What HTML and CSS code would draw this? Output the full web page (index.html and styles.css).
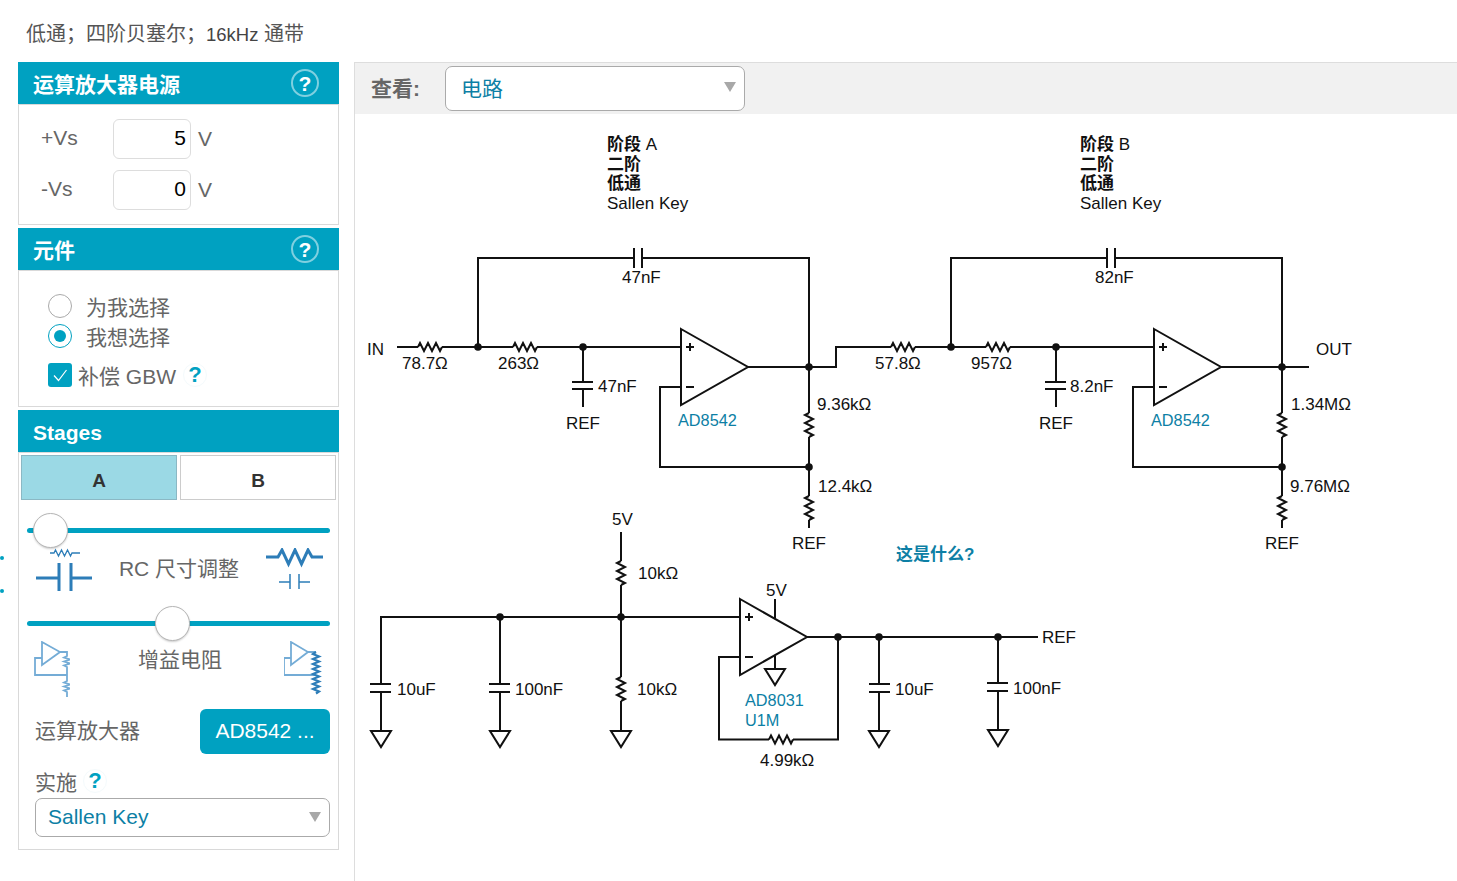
FILE: index.html
```html
<!DOCTYPE html>
<html lang="en">
<head>
	<meta charset="UTF-8">
	<title>低通滤波器</title>
	<link rel="stylesheet" href="styles.css">
</head>
<body>
	<span class="edge-dot dot-a"></span>
	<span class="edge-dot dot-b"></span>
	<div class="title">低通&#xFF1B;四阶贝塞尔&#xFF1B;<span class="title-num">16kHz</span> 通带</div>
	<div class="layout">
		<div class="sidebar">
			<div class="panel">
				<div class="panel-head">运算放大器电源<span class="help">?</span></div>
				<div class="panel-body supply">
					<div class="supply-row"><label>+Vs</label><input type="text" value="5" readonly><span class="unit">V</span></div>
					<div class="supply-row"><label>-Vs</label><input type="text" value="0" readonly><span class="unit">V</span></div>
				</div>
			</div>
			<div class="panel">
				<div class="panel-head">元件<span class="help">?</span></div>
				<div class="panel-body parts">
					<div class="radio-row"><span class="radio"></span>为我选择</div>
					<div class="radio-row"><span class="radio on"></span>我想选择</div>
					<div class="check-row">
						<span class="check"><svg width="24" height="24" viewBox="0 0 24 24"><path d="M6 12.5l4.5 5L18.5 7" fill="none" stroke="#fff" stroke-width="1.2"/></svg></span>
						<span class="check-text">补偿 GBW</span><span class="tip">?</span>
					</div>
				</div>
			</div>
			<div class="panel">
				<div class="panel-head head-latin">Stages</div>
				<div class="panel-body stages">
					<div class="tabs"><div class="tab active">A</div><div class="tab">B</div></div>
					<div class="slider slider-rc"><div class="track"></div><div class="thumb"></div></div>
					<div class="slider-row rc-row">
						<svg width="56" height="45" viewBox="36 547 56 45">
							<path class="ico" d="M50 552h4l1.500 -3 3 6 3 -6 3 6 3 -6 3 6 1.500 -3h8" stroke-width="1.300"/>
							<path class="ico" stroke-width="3" d="M36 577H59M59 562V590M71 562V590M71 577H92"/>
						</svg>
						<span>RC 尺寸调整</span>
						<svg width="57" height="45" viewBox="266 547 57 45">
							<path class="ico" stroke-width="3" d="M266 556h12l4 -7 6.500 14 6.500 -14 6.500 14 6.500 -14 4 7h11"/>
							<path class="ico" stroke-width="1.500" d="M279 581H290M290 573V588M299 573V588M299 581H310"/>
						</svg>
					</div>
					<div class="slider slider-gain"><div class="track"></div><div class="thumb"></div></div>
					<div class="slider-row gain-row">
						<svg width="36" height="57" viewBox="34 640 36 57">
							<path class="ico light" stroke-width="1.800" d="M42 641L60 651L42 664ZM42 657H35V674H67M60 651H67V655l-3 1.500 6 2 -6 2 6 2 -6 2 3 1.500V680l-3 1.500 6 2 -6 2 6 2 -6 2 3 1.500V696"/>
						</svg>
						<span>增益电阻</span>
						<svg width="38" height="57" viewBox="284 640 38 57">
							<path class="ico light" stroke-width="1.800" d="M291 641L308 651L291 664ZM291 657H284V674H316M308 651H316"/>
							<path class="ico" stroke-width="2.200" d="M316 651l-3 2 6 2.500 -6 2.500 6 2.500 -6 2.500 6 2.500 -6 2.500 6 2.500 -6 2.500 6 2.500 -6 2.500 6 2.500 -6 2.500 6 2.500 -6 2.500 6 2.500 -3 2"/>
						</svg>
					</div>
					<div class="amp-row"><span>运算放大器</span><div class="amp-btn">AD8542 ...</div></div>
					<div class="impl-row">实施<span class="tip">?</span></div>
					<div class="select impl-select">Sallen Key<span class="arrow"></span></div>
				</div>
			</div>
		</div>
		<div class="main">
			<div class="toolbar">
				<span class="toolbar-label">查看:</span>
				<div class="select view-select">电路<span class="arrow"></span></div>
			</div>
			<svg class="circuit" width="1102" height="767" viewBox="355 114 1102 767">
				<defs>
					<path id="rh" class="wire" d="M0 0l2 -4 4 8 4 -8 4 8 4 -8 4 8 2 -4"/>
					<path id="rv" class="wire" d="M0 0l-4 2 8 4 -8 4 8 4 -8 4 8 4 -4 2"/>
					<path id="gnd" class="wire" d="M-10 0H10L0 16Z"/>
					<g id="stage">
						<path class="wire" d="M478 347V258H634M642 258H809V413M809 437V496M809 520V528M634 248V268M642 248V268"/>
						<path class="wire" d="M478 347H513M537 347H681M583 347V382M572 382H593M572 389H593M583 389V407"/>
						<path class="wire" d="M681 329L748 367L681 405ZM686 347H694M690 343V351M686 387H694M681 387H660V467H809M748 367H809"/>
						<use href="#rh" x="513" y="347"/>
						<use href="#rv" x="809" y="413"/>
						<use href="#rv" x="809" y="496"/>
						<circle class="dot" cx="478" cy="347" r="3.800"/>
						<circle class="dot" cx="583" cy="347" r="3.800"/>
						<circle class="dot" cx="809" cy="367" r="3.800"/>
						<circle class="dot" cx="809" cy="467" r="3.800"/>
					</g>
				</defs>

				<use href="#stage"/>
				<use href="#stage" x="473"/>
				<path class="wire" d="M397 347H418M442 347H478M809 367H836V347H891M915 347H951M1282 367H1309"/>
				<use href="#rh" x="418" y="347"/>
				<use href="#rh" x="891" y="347"/>

				<!-- ref buffer -->
				<path class="wire" d="M621 532V561M621 585V677M621 701V731M381 684V617H740M500 617V684M370 684H391M370 692H391M381 692V731M489 684H510M489 692H510M500 692V731"/>
				<path class="wire" d="M740 599L807 637L740 675ZM745 617H753M749 613V621M745 657H753M775 599V618M775 656V669"/>
				<path class="wire" d="M807 637H1038M740 657H719V739.500H769M793 739.500H838V637M879 637V684M869 684H890M869 692H890M879 692V731M998 637V683M987 683H1008M987 691H1008M998 691V730"/>
				<use href="#rv" x="621" y="561"/>
				<use href="#rv" x="621" y="677"/>
				<use href="#rh" x="769" y="739.500"/>
				<use href="#gnd" x="381" y="731"/>
				<use href="#gnd" x="500" y="731"/>
				<use href="#gnd" x="621" y="731"/>
				<use href="#gnd" x="775" y="669"/>
				<use href="#gnd" x="879" y="731"/>
				<use href="#gnd" x="998" y="730"/>
				<circle class="dot" cx="500" cy="617" r="3.800"/>
				<circle class="dot" cx="621" cy="617" r="3.800"/>
				<circle class="dot" cx="838" cy="637" r="3.800"/>
				<circle class="dot" cx="879" cy="637" r="3.800"/>
				<circle class="dot" cx="998" cy="637" r="3.800"/>

				<text class="lbl"><tspan class="b" x="607" y="150">阶段</tspan> A<tspan class="b" x="607" y="170">二阶</tspan><tspan class="b" x="607" y="189">低通</tspan><tspan x="607" y="209">Sallen Key</tspan></text>
				<text class="lbl"><tspan class="b" x="1080" y="150">阶段</tspan> B<tspan class="b" x="1080" y="170">二阶</tspan><tspan class="b" x="1080" y="189">低通</tspan><tspan x="1080" y="209">Sallen Key</tspan></text>

				<text class="lbl" x="367" y="355">IN</text>
				<text class="lbl" x="402" y="369">78.7Ω</text>
				<text class="lbl" x="498" y="369">263Ω</text>
				<text class="lbl" x="622" y="283">47nF</text>
				<text class="lbl" x="598" y="392">47nF</text>
				<text class="lbl" x="566" y="429">REF</text>
				<text class="lbl part" x="678" y="426">AD8542</text>
				<text class="lbl" x="817" y="410">9.36kΩ</text>
				<text class="lbl" x="818" y="492">12.4kΩ</text>
				<text class="lbl" x="792" y="549">REF</text>

				<text class="lbl" x="875" y="369">57.8Ω</text>
				<text class="lbl" x="971" y="369">957Ω</text>
				<text class="lbl" x="1095" y="283">82nF</text>
				<text class="lbl" x="1070" y="392">8.2nF</text>
				<text class="lbl" x="1039" y="429">REF</text>
				<text class="lbl part" x="1151" y="426">AD8542</text>
				<text class="lbl" x="1316" y="355">OUT</text>
				<text class="lbl" x="1291" y="410">1.34MΩ</text>
				<text class="lbl" x="1290" y="492">9.76MΩ</text>
				<text class="lbl" x="1265" y="549">REF</text>
				<text class="lbl part link" x="896" y="560">这是什么?</text>

				<text class="lbl" x="612" y="525">5V</text>
				<text class="lbl" x="638" y="579">10kΩ</text>
				<text class="lbl" x="637" y="695">10kΩ</text>
				<text class="lbl" x="397" y="695">10uF</text>
				<text class="lbl" x="515" y="695">100nF</text>
				<text class="lbl" x="766" y="596">5V</text>
				<text class="lbl part" x="745" y="706">AD8031</text>
				<text class="lbl part" x="745" y="726">U1M</text>
				<text class="lbl" x="760" y="766">4.99kΩ</text>
				<text class="lbl" x="895" y="695">10uF</text>
				<text class="lbl" x="1013" y="694">100nF</text>
				<text class="lbl" x="1042" y="643">REF</text>
			</svg>
		</div>
	</div>
</body>
</html>
```

FILE: styles.css
```css
* { box-sizing: border-box; margin: 0; padding: 0; }
html, body { height: 100%; overflow: hidden; }
body { position: relative; background: #fff; color: #666; font-family: "Liberation Sans", "Noto Sans CJK SC", sans-serif; font-size: 21px; }

.edge-dot { position: absolute; left: 0; width: 4px; height: 4px; border-radius: 50%; background: #00a1c1; }
.dot-a { top: 556px; }
.dot-b { top: 589px; }

.title { height: 62px; padding: 20px 0 0 26px; font-size: 20px; line-height: 28px; color: #555; }
.title-num { font-size: 18.500px; color: #444; }

.layout { display: flex; height: 819px; }
.sidebar { width: 321px; margin-left: 18px; flex: none; }
.main { flex: 1; margin-left: 15px; border-left: 1px solid #ddd; border-top: 1px solid #ddd; }

.panel { margin-bottom: 3px; }
.panel-head { display: flex; justify-content: space-between; align-items: center; height: 42px; padding: 0 20px 1px 15px; background: #00a1c1; color: #fff; font-weight: bold; }
.head-latin { padding: 3px 20px 0 15px; }
.panel-body { border: 1px solid #d9d9d9; }
.help { display: flex; justify-content: center; align-items: center; width: 28px; height: 28px; margin-top: 1px; border: 2px solid #7fd0e0; border-radius: 50%; font-size: 21px; line-height: 1; }

.supply { display: flex; flex-direction: column; gap: 11px; padding: 14px 0 14px 22px; }
.supply-row { display: flex; align-items: center; height: 40px; }
.supply-row label { width: 72px; padding-bottom: 2px; }
.supply-row input { width: 78px; height: 40px; padding: 0 4px 2px 0; border: 1px solid #ddd; border-radius: 6px; font: inherit; color: #000; text-align: right; outline: none; }
.unit { margin-left: 7px; }

.parts { padding: 23px 0 19px 29px; }
.radio-row { display: flex; align-items: center; height: 24px; margin-bottom: 6px; }
.radio { display: flex; justify-content: center; align-items: center; width: 24px; height: 24px; margin-right: 14px; border: 1px solid #aaa; border-radius: 50%; }
.radio.on { border-color: #00a1c1; }
.radio.on::after { content: ""; width: 12px; height: 12px; border-radius: 50%; background: #00a1c1; }
.check-row { display: flex; align-items: center; height: 24px; margin-top: 15px; }
.check { width: 24px; height: 24px; border-radius: 3px; background: #00a1c1; }
.check-text { margin-left: 6px; }
.tip { display: inline-flex; justify-content: center; align-items: center; width: 24px; height: 24px; margin-left: 7px; border: 1px solid #f4fafc; border-radius: 50%; color: #00a1c1; font-size: 22px; font-weight: bold; }

.stages { height: 398px; padding: 2px 2px 0; }
.tabs { display: flex; gap: 3px; }
.tab { flex: 1; height: 45px; border: 1px solid #ccc; color: #333; font-size: 19px; font-weight: bold; line-height: 49px; text-align: center; }
.tab.active { background: #9bd9e5; border-color: #8bb8c4; }

.slider { position: relative; height: 35px; margin: 0 6px; }
.slider-rc { margin-top: 13px; }
.slider-gain { margin-top: 13px; }
.track { position: absolute; left: 0; right: 0; top: 15px; height: 5px; border-radius: 3px; background: #00a1c1; }
.thumb { position: absolute; top: 0; width: 35px; height: 35px; border: 1px solid #b5b5b5; border-radius: 50%; background: #fff; box-shadow: 0 1px 2px rgba(0,0,0,.2); }
.slider-rc .thumb { left: 6px; }
.slider-gain .thumb { left: 128px; }

.slider-row { display: flex; justify-content: space-between; }
.rc-row { height: 45px; margin: 0 13px 0 15px; align-items: center; }
.rc-row span { margin-bottom: 8px; }
.gain-row { height: 57px; margin: 0 14px 0 13px; }
.gain-row span { height: 28px; margin: 5px 0 0 6px; line-height: 28px; }
.ico { fill: none; stroke: #2d7db8; }
.ico.light { stroke: #74acd6; }

.amp-row { display: flex; justify-content: space-between; align-items: center; margin: 11px 6px 0 14px; }
.amp-row span { margin-bottom: 6px; }
.amp-btn { width: 130px; height: 45px; padding-bottom: 2px; border-radius: 6px; background: #00a1c1; color: #fff; line-height: 43px; text-align: center; }
.impl-row { display: flex; align-items: center; height: 26px; margin: 14px 0 0 14px; padding-bottom: 1px; }
.impl-row .tip { margin-left: 6px; }

.select { display: flex; justify-content: space-between; align-items: center; border: 1px solid #aaa; border-radius: 7px; background: #fff; color: #0d7fa5; }
.arrow { width: 0; height: 0; border-left: 6px solid transparent; border-right: 6px solid transparent; border-top: 10px solid #a8a8a8; }
.impl-select { width: 295px; height: 39px; margin: 4px 0 0 14px; padding: 0 8px 2px 12px; }
.view-select { width: 300px; height: 45px; padding: 0 8px 3px 15px; }

.toolbar { display: flex; align-items: center; height: 51px; padding-left: 16px; background: #f1f1f1; }
.toolbar-label { width: 74px; padding-bottom: 3px; font-weight: bold; }

.circuit { display: block; }
.wire { fill: none; stroke: #111; stroke-width: 2; }
.dot { fill: #111; }
.lbl { font-size: 17px; fill: #111; }
.part { font-size: 16.300px; fill: #0d7fa5; }
.link { font-size: 17px; font-weight: bold; }
.b { font-weight: bold; }
```
